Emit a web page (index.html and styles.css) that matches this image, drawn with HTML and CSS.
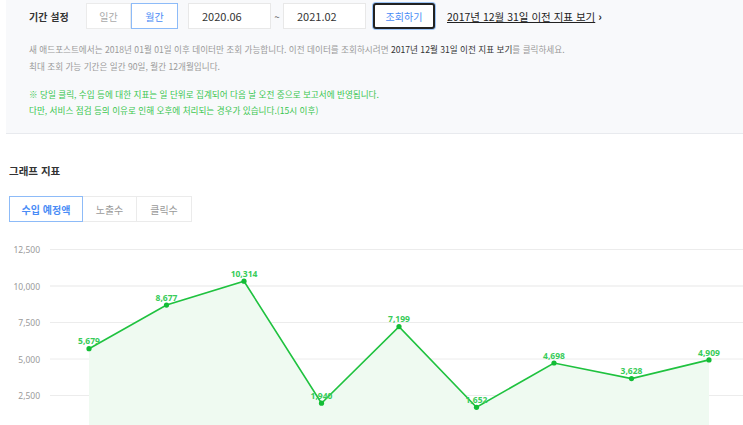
FILE: index.html
```html
<!DOCTYPE html>
<html lang="ko">
<head>
    <meta charset="UTF-8">
    <meta name="viewport" content="width=device-width, initial-scale=1.0">
    <title>애드포스트 리포트</title>
    <link rel="stylesheet" href="styles.css">
</head>
<body>
    <section class="filtro">
        <div class="linha">
            <span class="rotulo">기간 설정</span>
            <div class="alternar">
                <button class="opcao">일간</button>
                <button class="opcao ativo">월간</button>
            </div>
            <input class="data" type="text" value="2020.06" readonly>
            <span class="til">~</span>
            <input class="data" type="text" value="2021.02" readonly>
            <button class="consultar">조회하기</button>
            <a class="link-antigo" href="#"><u>2017년 12월 31일 이전 지표 보기</u> <b>›</b></a>
        </div>
        <p class="aviso">새 애드포스트에서는 2018년 01월 01일 이후 데이터만 조회 가능합니다. 이전 데이터를 조회하시려면 <em>2017년 12월 31일 이전 지표 보기</em>를 클릭하세요.<br>최대 조회 가능 기간은 일간 90일, 월간 12개월입니다.</p>
        <p class="aviso verde">※ 당일 클릭, 수입 등에 대한 지표는 일 단위로 집계되어 다음 날 오전 중으로 보고서에 반영됩니다.<br>다만, 서비스 점검 등의 이유로 인해 오후에 처리되는 경우가 있습니다.(15시 이후)</p>
    </section>

    <h2 class="titulo">그래프 지표</h2>
    <div class="abas">
        <button class="aba ativo">수입 예정액</button>
        <button class="aba">노출수</button>
        <button class="aba">클릭수</button>
    </div>

    <svg class="grafico" viewBox="0 235 743 190" width="743" height="190">
        <!-- linhas de grade -->
        <g class="grade">
            <line x1="50" y1="249.5" x2="743" y2="249.5"/>
            <line x1="50" y1="286" x2="743" y2="286" class="grossa"/>
            <line x1="50" y1="322.5" x2="743" y2="322.5"/>
            <line x1="50" y1="359" x2="743" y2="359"/>
            <line x1="50" y1="395.5" x2="743" y2="395.5"/>
        </g>
        <g class="eixo">
            <text x="40" y="253">12,500</text>
            <text x="40" y="289.5">10,000</text>
            <text x="40" y="326">7,500</text>
            <text x="40" y="362.5">5,000</text>
            <text x="40" y="399">2,500</text>
        </g>
        <polygon class="area" points="89,348.7 166.5,305.1 244,281.2 321.5,403.2 399,326.6 476.5,407.3 554,363 631.5,378.6 709,359.9 709,431 89,431"/>
        <polyline class="linha-valor" points="89,348.7 166.5,305.1 244,281.2 321.5,403.2 399,326.6 476.5,407.3 554,363 631.5,378.6 709,359.9"/>
        <g class="pontos">
            <circle cx="89" cy="348.7" r="2.6"/>
            <circle cx="166.5" cy="305.1" r="2.6"/>
            <circle cx="244" cy="281.2" r="2.6"/>
            <circle cx="321.5" cy="403.2" r="2.6"/>
            <circle cx="399" cy="326.6" r="2.6"/>
            <circle cx="476.5" cy="407.3" r="2.6"/>
            <circle cx="554" cy="363" r="2.6"/>
            <circle cx="631.5" cy="378.6" r="2.6"/>
            <circle cx="709" cy="359.9" r="2.6"/>
        </g>
        <g class="valores">
            <text x="89" y="344">5,679</text>
            <text x="166.5" y="300.5">8,677</text>
            <text x="244" y="277">10,314</text>
            <text x="321.5" y="398.5">1,940</text>
            <text x="399" y="322">7,199</text>
            <text x="476.5" y="402.5">1,652</text>
            <text x="554" y="358.5">4,698</text>
            <text x="631.5" y="374">3,628</text>
            <text x="709" y="355.5">4,909</text>
        </g>
    </svg>
</body>
</html>
```

FILE: styles.css
```css
* {
box-sizing: border-box;
}

body {
margin: 0;
width: 743px;
height: 425px;
overflow: hidden;
background-color: #fff;
font-family: "Noto Sans CJK KR", "Noto Sans", sans-serif;
color: #333;
}

button, input {
font-family: inherit;
margin: 0;
}

.filtro {
margin-left: 6px;
padding: 3px 0 0 23px;
height: 134px;
background-color: #f8f9fb;
border-bottom: 1px solid #e8eaee;
}

.linha {
display: flex;
align-items: center;
height: 26px;
}

.rotulo {
width: 57px;
font-size: 10px;
font-weight: bold;
color: #333;
}

.alternar {
display: flex;
height: 26px;
}

.opcao {
height: 26px;
width: 45px;
border: 1px solid #ebebeb;
background-color: #fff;
color: #aaa;
font-size: 10px;
padding: 0;
}

.opcao.ativo {
width: 47px;
border-color: #8dbbf8;
color: #4a8cf6;
}

.data {
margin-left: 10px;
width: 83px;
height: 26px;
border: 1px solid #e8e8e8;
background-color: #fff;
padding: 0 0 0 13px;
font-size: 11px;
color: #333;
}

.til {
width: 12px;
text-align: center;
font-size: 10px;
color: #666;
margin-left: 0;
}

.til + .data {
margin-left: 0;
}

.consultar {
margin-left: 7px;
width: 62px;
height: 26px;
border: 2px solid #222;
border-radius: 3px;
box-shadow: 0 0 0 1px #9cc4f6;
background-color: #fff;
color: #4a8cf6;
font-size: 10px;
padding: 0;
}

.link-antigo {
margin-left: 12px;
font-size: 10.5px;
color: #222;
text-decoration: none;
}

.link-antigo b {
font-size: 11px;
}

.aviso {
margin: 12px 0 0;
font-size: 8.6px;
line-height: 17px;
color: #9a9a9a;
}

.aviso em {
font-style: normal;
color: #333;
}

.aviso.verde {
margin-top: 11px;
line-height: 16px;
color: #38c64f;
}

.titulo {
margin: 30px 0 0 9px;
font-size: 10.5px;
font-weight: bold;
color: #333;
line-height: 14px;
}

.abas {
display: flex;
margin: 18px 0 0 9px;
}

.aba {
height: 26px;
width: 54px;
border: 1px solid #ebebeb;
border-left: none;
background-color: #fff;
color: #9a9a9a;
font-size: 10px;
padding: 0;
}

.aba.ativo {
width: 74px;
border: 1px solid #8dbbf8;
color: #4a8cf6;
font-weight: bold;
}

.aba:last-child {
width: 55px;
}

.grafico {
display: block;
margin-top: 13px;
}

.grade line {
stroke: #ececec;
stroke-width: 1;
}

.grade line.grossa {
stroke: #f3f3f3;
stroke-width: 2;
}

.eixo text {
font-family: "Noto Sans", sans-serif;
font-size: 8.5px;
fill: #9a9a9a;
text-anchor: end;
}

.area {
fill: #effaf1;
}

.linha-valor {
fill: none;
stroke: #1fc23f;
stroke-width: 1.6;
}

.pontos circle {
fill: #13bd36;
}

.valores text {
font-family: "Noto Sans", sans-serif;
font-size: 8.5px;
font-weight: bold;
fill: #38cc5a;
text-anchor: middle;
}
```
